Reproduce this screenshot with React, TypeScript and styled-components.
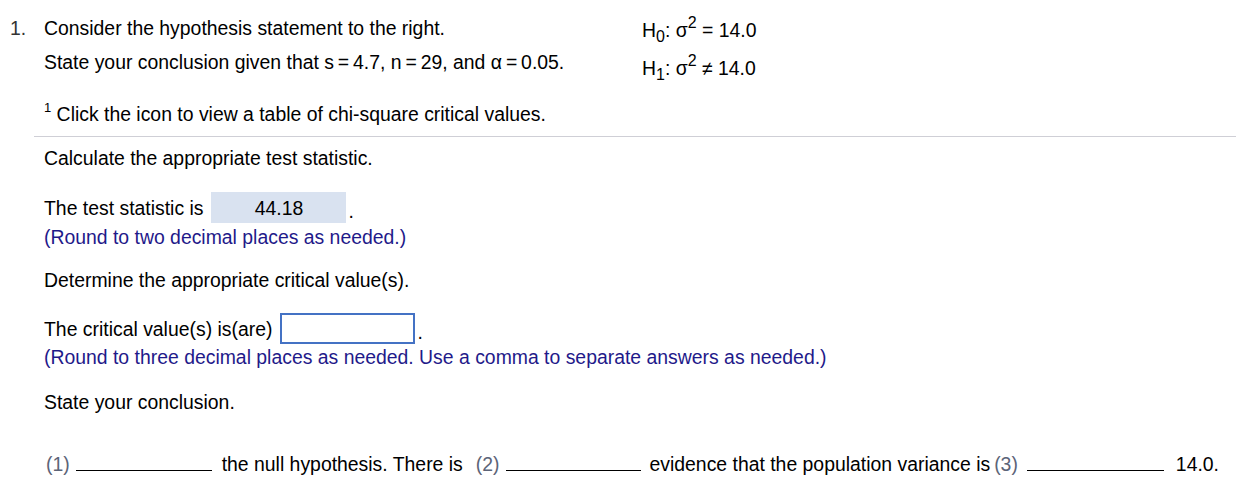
import styled, { createGlobalStyle } from "styled-components";

const GlobalStyle = createGlobalStyle`
  html, body {
    margin: 0;
    padding: 0;
    background: #ffffff;
  }
  body {
    font-family: "Liberation Sans", Arial, sans-serif;
    font-size: 19.4px;
    color: #000000;
  }
`;

const Page = styled.div`
  width: 1236px;
  height: 485px;
  overflow: hidden;
  padding-top: 16px;
  box-sizing: border-box;
`;

const Header = styled.div`
  display: grid;
  grid-template-columns: 44px 598px 1fr;
  line-height: 24px;
`;

const Number = styled.div`
  padding-left: 10px;
  color: #333333;
`;

const Lines = styled.div`
  display: flex;
  flex-direction: column;
`;

const Line = styled.div<{ $top?: number }>`
  margin-top: ${(p) => p.$top ?? 0}px;
  white-space: nowrap;
`;

const Hypotheses = styled.div`
  display: flex;
  flex-direction: column;
  gap: 14px;
  padding-top: 2px;
`;

const Sub = styled.sub`
  font-size: 16px;
  vertical-align: -5px;
  line-height: 0;
`;

const Sup = styled.sup<{ $size?: number }>`
  font-size: ${(p) => p.$size ?? 16}px;
  vertical-align: 9px;
  line-height: 0;
`;

const Footnote = styled.div`
  margin: 22px 0 0 44px;
  line-height: 24px;
  white-space: nowrap;
`;

const Divider = styled.hr`
  margin: 10px 0 0 34px;
  border: none;
  border-top: 1px solid #cfcfd6;
  height: 0;
`;

const Body = styled.div`
  padding-left: 44px;
  line-height: 24px;
`;

const Text = styled.div<{ $top: number }>`
  margin-top: ${(p) => p.$top}px;
  white-space: nowrap;
`;

const Hint = styled(Text)`
  color: #1f1a8a;
`;

const AnswerRow = styled.div<{ $top: number }>`
  margin-top: ${(p) => p.$top}px;
  display: flex;
  align-items: center;
  white-space: nowrap;
`;

const Filled = styled.span`
  display: inline-flex;
  align-items: center;
  justify-content: center;
  width: 135px;
  height: 31px;
  margin-left: 8px;
  background: #d9e2f0;
`;

const Empty = styled.span`
  display: inline-block;
  width: 131px;
  height: 27px;
  margin-left: 8px;
  border: 2px solid #4472c4;
  background: #ffffff;
`;

const Dot = styled.span`
  margin-left: 2px;
  align-self: flex-end;
  line-height: 24px;
`;

const Conclusion = styled.div`
  margin-top: 38px;
  padding-left: 2px;
  display: flex;
  align-items: baseline;
  white-space: nowrap;
  line-height: 24px;
`;

const Label = styled.span`
  color: #5c6478;
`;

const Blank = styled.span<{ $w: number; $before?: number; $after?: number }>`
  display: inline-block;
  width: ${(p) => p.$w}px;
  margin: 0 ${(p) => p.$after ?? 9}px 0 ${(p) => p.$before ?? 6}px;
  border-bottom: 1px solid #000000;
`;

const Words = styled.span<{ $after?: number }>`
  margin-right: ${(p) => p.$after ?? 9}px;
`;

const T = "\u2009";

export default function App() {
  return (
    <>
      <GlobalStyle />
      <Page>
        <Header>
          <Number>1.</Number>
          <Lines>
            <Line>Consider the hypothesis statement to the right.</Line>
            <Line $top={10}>
              State your conclusion given that s{T}={T}4.7, n{T}={T}29, and α{T}={T}0.05.
            </Line>
          </Lines>
          <Hypotheses>
            <Line>
              H<Sub>0</Sub>: σ<Sup>2</Sup> = 14.0
            </Line>
            <Line>
              H<Sub>1</Sub>: σ<Sup>2</Sup> ≠ 14.0
            </Line>
          </Hypotheses>
        </Header>
        <Footnote>
          <Sup $size={13}>1</Sup> Click the icon to view a table of chi-square critical values.
        </Footnote>
        <Divider />
        <Body>
          <Text $top={9}>Calculate the appropriate test statistic.</Text>
          <AnswerRow $top={22}>
            The test statistic is
            <Filled>44.18</Filled>
            <Dot>.</Dot>
          </AnswerRow>
          <Hint $top={2}>(Round to two decimal places as needed.)</Hint>
          <Text $top={19}>Determine the appropriate critical value(s).</Text>
          <AnswerRow $top={21}>
            The critical value(s) is(are)
            <Empty />
            <Dot>.</Dot>
          </AnswerRow>
          <Hint $top={1}>
            (Round to three decimal places as needed. Use a comma to separate answers as needed.)
          </Hint>
          <Text $top={21}>State your conclusion.</Text>
          <Conclusion>
            <Label>(1)</Label>
            <Blank $w={136} $after={10} />
            <Words $after={13}>the null hypothesis. There is</Words>
            <Label>(2)</Label>
            <Blank $w={135} />
            <Words $after={4}>evidence that the population variance is</Words>
            <Label>(3)</Label>
            <Blank $w={137} $before={9} $after={12} />
            <Words>14.0.</Words>
          </Conclusion>
        </Body>
      </Page>
    </>
  );
}
